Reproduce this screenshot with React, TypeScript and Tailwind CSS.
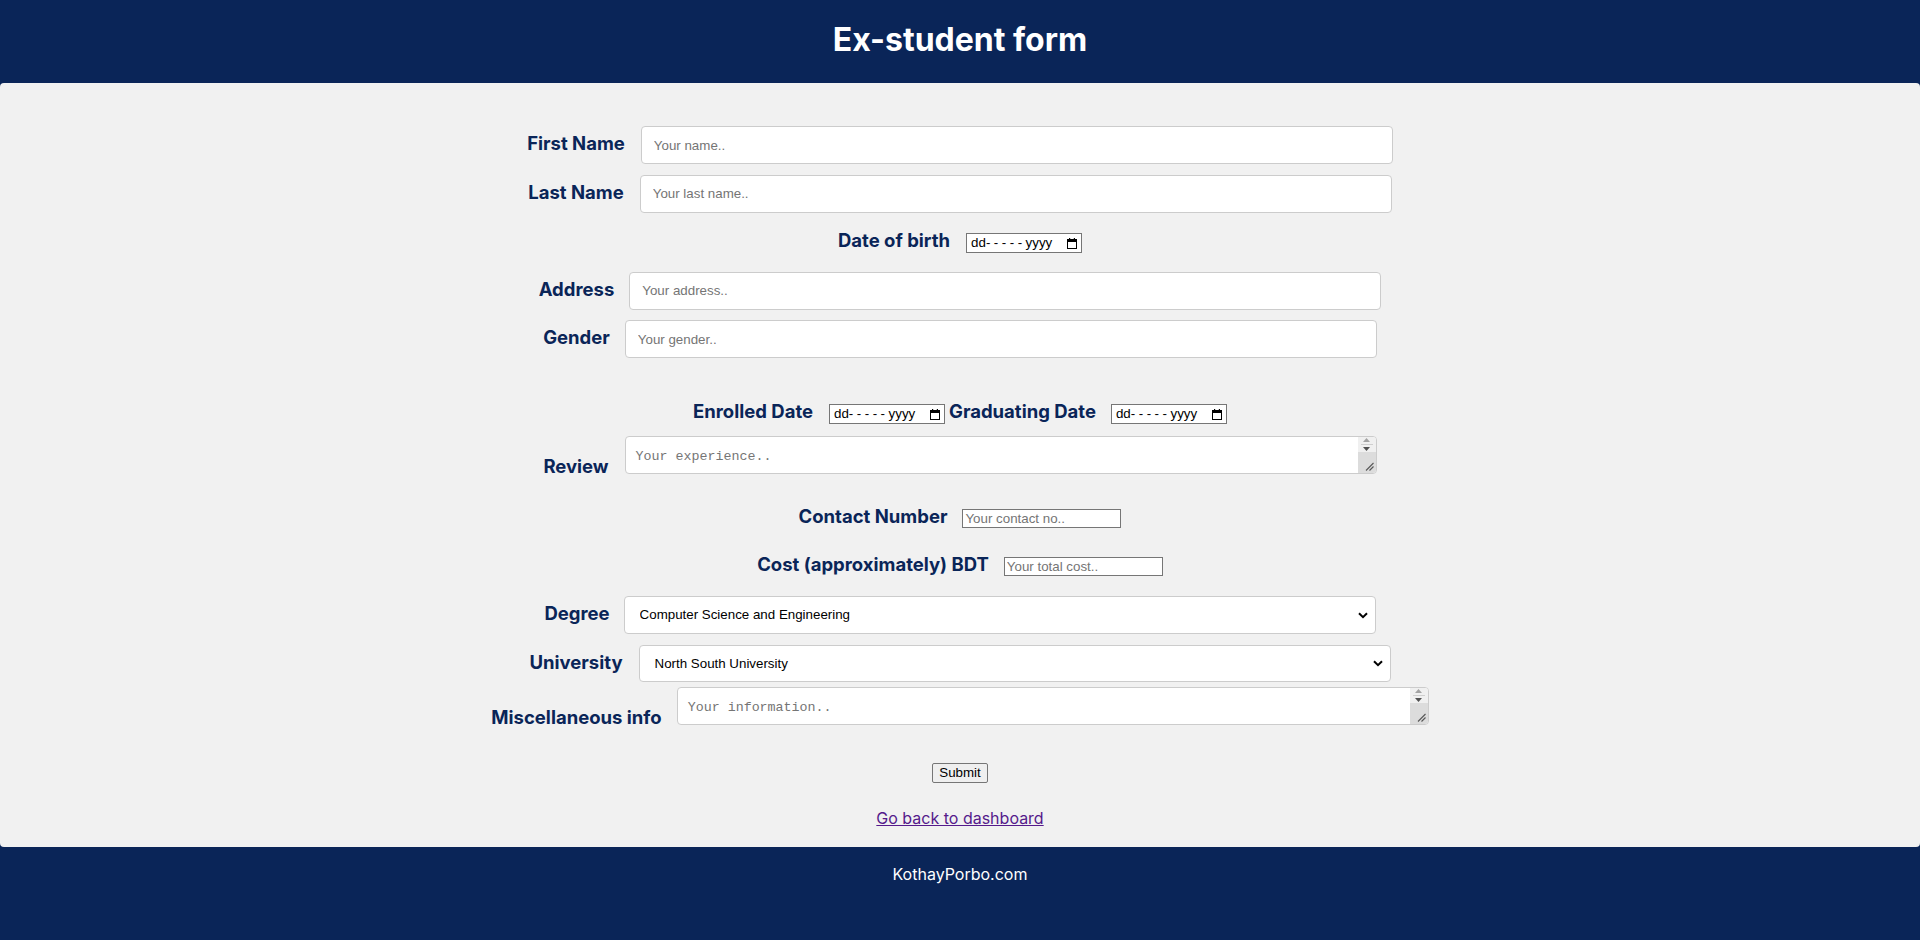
import React from "react";

const NAVY = "bg-[#0a2558]";

function Label({ children, extra = "" }: { children: React.ReactNode; extra?: string }) {
  return (
    <label className={`whitespace-nowrap text-[18.5px] font-bold leading-none text-[#0a2558] [font-family:Inter,sans-serif] ${extra}`}>
      {children}
    </label>
  );
}

const bigInput =
  "h-[38px] w-[752px] rounded-[4px] border border-[#cccccc] bg-white px-[12px] text-[13.33px] text-black [font-family:'Liberation_Sans',Arial,sans-serif] placeholder:text-[#757575] outline-none";

const smallInput =
  "h-[19px] w-[159px] border border-[#767676] bg-white px-[2px] text-[13.33px] text-black [font-family:'Liberation_Sans',Arial,sans-serif] placeholder:text-[#757575] outline-none";

function DateField() {
  return (
    <div className="flex h-[20px] w-[116px] items-center justify-between border border-[#767676] bg-white pl-[4px] pr-[4px] text-[13.33px] leading-none text-black [font-family:'Liberation_Sans',Arial,sans-serif]">
      <span className="whitespace-nowrap">
        dd<span className="tracking-[3.5px]">-----</span>yyyy
      </span>
      <svg width="10" height="11" viewBox="0 0 10 11" className="shrink-0">
        <rect x="0.5" y="1.5" width="9" height="9" fill="none" stroke="#000" strokeWidth="1" />
        <rect x="0" y="1" width="10" height="3" fill="#000" />
        <rect x="2" y="0" width="1.2" height="2" fill="#000" />
        <rect x="6.8" y="0" width="1.2" height="2" fill="#000" />
      </svg>
    </div>
  );
}

function TextAreaBox({ placeholder }: { placeholder: string }) {
  return (
    <div className="flex h-[38px] w-[752px] overflow-hidden rounded-[4px] border border-[#cccccc] bg-white">
      <textarea
        placeholder={placeholder}
        className="h-full min-w-0 flex-1 resize-none overflow-hidden bg-transparent px-[10px] py-[12px] text-[13.33px] leading-[15px] text-black [font-family:'Liberation_Mono',monospace] placeholder:text-[#757575] outline-none"
      />
      <div className="flex w-[18px] flex-col">
        <div className="flex h-[15px] flex-col items-center justify-center gap-[2px] bg-[#f0f0f0]">
          <svg width="7" height="4" viewBox="0 0 7 4">
            <path d="M3.5 0 L7 4 L0 4 Z" fill="#a3a3a3" />
          </svg>
          <div className="h-px w-[12px] bg-[#cfcfcf]" />
          <svg width="7" height="4" viewBox="0 0 7 4">
            <path d="M0 0 L7 0 L3.5 4 Z" fill="#505050" />
          </svg>
        </div>
        <div className="flex flex-1 items-end justify-end bg-[#dcdcdc] pb-[2px] pr-[2px]">
          <svg width="9" height="9" viewBox="0 0 9 9">
            <path d="M1 8.5 L8.5 1" stroke="#555" strokeWidth="1.1" />
            <path d="M4.5 8.5 L8.5 4.5" stroke="#555" strokeWidth="1.1" />
          </svg>
        </div>
      </div>
    </div>
  );
}

function SelectBox({ value, options, h }: { value: string; options: string[]; h: string }) {
  return (
    <div className={`flex ${h} w-[752px] items-center rounded-[4px] border border-[#cccccc] bg-white`}>
      <select
        defaultValue={value}
        className="h-full min-w-0 flex-1 appearance-none bg-transparent pl-[15px] text-[13.33px] text-black [font-family:'Liberation_Sans',Arial,sans-serif] outline-none"
      >
        {options.map((o) => (
          <option key={o} value={o}>
            {o}
          </option>
        ))}
      </select>
      <svg width="10" height="7" viewBox="0 0 10 7" className="mr-[7px] shrink-0">
        <path d="M1 1.2 L5 5.2 L9 1.2" fill="none" stroke="#000" strokeWidth="2" />
      </svg>
    </div>
  );
}

export default function App() {
  return (
    <div className={`flex min-h-[940px] flex-col ${NAVY}`}>
      <header className="flex h-[83px] items-center justify-center pb-[4px]">
        <h1 className="text-[32px] font-bold leading-none text-white [font-family:Inter,sans-serif]">
          Ex-student form
        </h1>
      </header>

      <main className="flex flex-col items-center rounded-[4px] bg-[#f1f1f1] pt-[43px] pb-[17px]">
        {/* First Name */}
        <div className="flex h-[38px] items-center justify-center gap-[16px]">
          <Label extra="mb-[3px]">First Name</Label>
          <input type="text" placeholder="Your name.." className={bigInput} />
        </div>

        {/* Last Name */}
        <div className="mt-[11px] flex h-[37px] items-center justify-center gap-[16px]">
          <Label extra="mb-[3px]">Last Name</Label>
          <input type="text" placeholder="Your last name.." className={`${bigInput} h-[37px]`} />
        </div>

        {/* Date of birth */}
        <div className="mt-[21px] flex h-[20px] items-center justify-center gap-[16px]">
          <Label extra="mb-[6px]">Date of birth</Label>
          <DateField />
        </div>

        {/* Address */}
        <div className="mt-[19px] flex h-[37px] items-center justify-center gap-[15px]">
          <Label extra="mb-[3px]">Address</Label>
          <input type="text" placeholder="Your address.." className={`${bigInput} h-[37px]`} />
        </div>

        {/* Gender */}
        <div className="mt-[11px] flex h-[38px] items-center justify-center gap-[15px]">
          <Label extra="mb-[3px]">Gender</Label>
          <input type="text" placeholder="Your gender.." className={bigInput} />
        </div>

        {/* Enrolled / Graduating */}
        <div className="mt-[46px] flex h-[20px] items-center justify-center">
          <Label extra="mb-[6px] mr-[16px]">Enrolled Date</Label>
          <DateField />
          <Label extra="mb-[6px] ml-[4px] mr-[15px]">Graduating Date</Label>
          <DateField />
        </div>

        {/* Review */}
        <div className="mt-[12px] flex h-[38px] items-end justify-center gap-[16px]">
          <Label extra="mb-[-1px]">Review</Label>
          <TextAreaBox placeholder="Your experience.." />
        </div>

        {/* Contact */}
        <div className="mt-[35px] flex h-[19px] items-center justify-center gap-[15px]">
          <Label extra="mb-[4px]">Contact Number</Label>
          <input type="text" placeholder="Your contact no.." className={smallInput} />
        </div>

        {/* Cost */}
        <div className="mt-[29px] flex h-[19px] items-center justify-center gap-[15px]">
          <Label extra="mb-[4px]">Cost (approximately) BDT</Label>
          <input type="text" placeholder="Your total cost.." className={smallInput} />
        </div>

        {/* Degree */}
        <div className="mt-[20px] flex h-[38px] items-center justify-center gap-[14px]">
          <Label extra="mb-[3px]">Degree</Label>
          <SelectBox
            h="h-[38px]"
            value="Computer Science and Engineering"
            options={["Computer Science and Engineering", "Electrical and Electronic Engineering", "Business Administration"]}
          />
        </div>

        {/* University */}
        <div className="mt-[11px] flex h-[37px] items-center justify-center gap-[16px]">
          <Label extra="mb-[3px]">University</Label>
          <SelectBox
            h="h-[37px]"
            value="North South University"
            options={["North South University", "BUET", "University of Dhaka"]}
          />
        </div>

        {/* Misc */}
        <div className="mt-[5px] flex h-[38px] items-end justify-center gap-[15px]">
          <Label extra="mb-[-1px]">Miscellaneous info</Label>
          <TextAreaBox placeholder="Your information.." />
        </div>

        {/* Submit */}
        <div className="mt-[38px] flex h-[20px] items-center justify-center">
          <button
            type="submit"
            className="h-[20px] rounded-[2px] border border-[#767676] bg-[#efefef] px-[6px] text-[13.33px] leading-none text-black [font-family:'Liberation_Sans',Arial,sans-serif]"
          >
            Submit
          </button>
        </div>

        {/* Link */}
        <div className="mt-[23px] flex h-[24px] items-center justify-center">
          <a
            href="#"
            className="text-[16px] leading-none text-[#551a8b] underline [font-family:Inter,sans-serif]"
          >
            Go back to dashboard
          </a>
        </div>
      </main>

      <footer className="flex h-[93px] justify-center pt-[17px]">
        <p className="text-[16px] leading-[20px] text-white [font-family:Inter,sans-serif]">KothayPorbo.com</p>
      </footer>
    </div>
  );
}
